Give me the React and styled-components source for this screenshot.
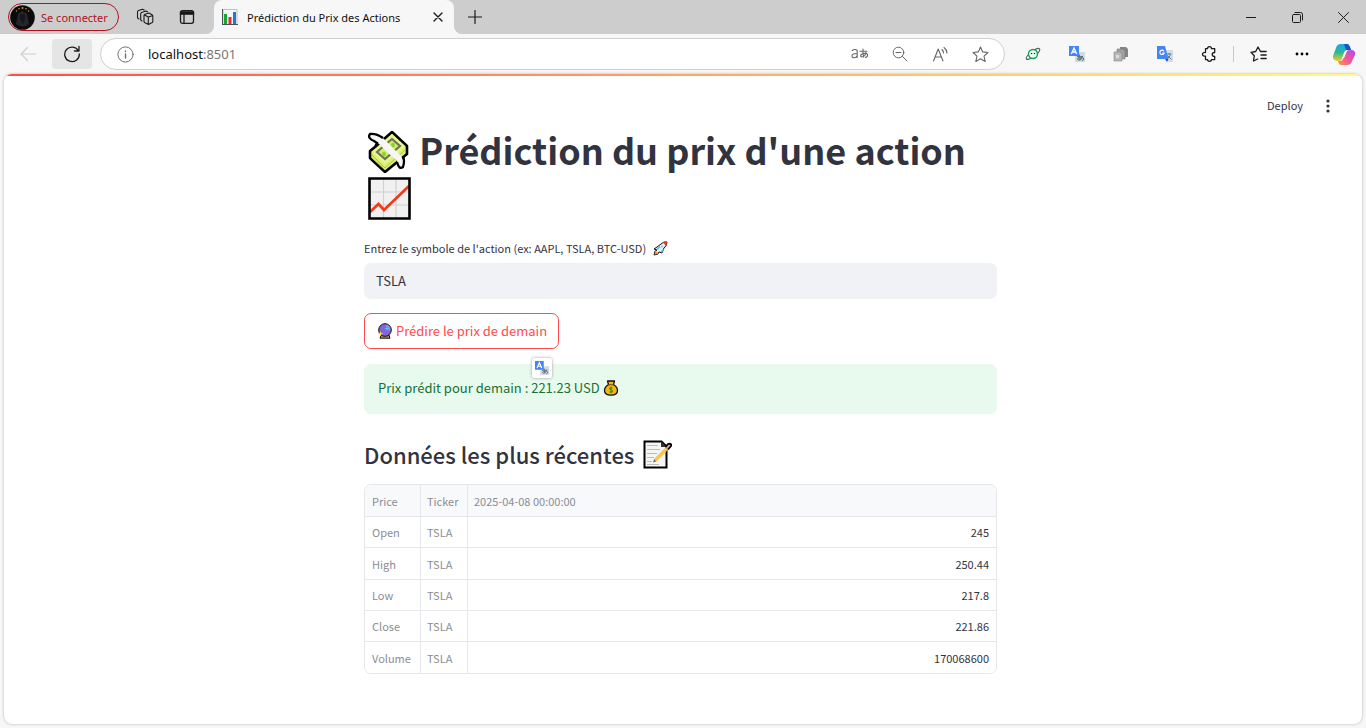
import React from "react";
import styled, { createGlobalStyle } from "styled-components";

const GlobalStyle = createGlobalStyle`
  * { box-sizing: border-box; }
  body { margin: 0; background: #f7f7f7; }
  button, input { font: inherit; color: inherit; }
`;

const ui = `"Segoe UI", "Noto Sans", "Open Sans", sans-serif`;
const body = `"Noto Sans CJK SC", "Noto Sans", sans-serif`;

const Window = styled.div`
  min-height: 100vh;
  display: flex;
  flex-direction: column;
  background: #f7f7f7;
`;

const TitleBar = styled.header`
  height: 34px;
  display: flex;
  align-items: stretch;
  background: #cdcdcd;
  font-family: ${ui};
  font-size: 11px;
  color: #111;
`;

const LeftTools = styled.div`
  display: flex;
  align-items: center;
  padding-left: 8px;
  width: 214px;
  border-bottom-right-radius: 8px;
  background: #cdcdcd;
`;

const ProfileButton = styled.button`
  height: 28px;
  width: 111px;
  display: flex;
  align-items: center;
  gap: 6px;
  padding: 0 0 0 1px;
  border: 1px solid #b1121d;
  border-radius: 14px;
  background: transparent;
  color: #b1121d;
  white-space: nowrap;
  margin-right: 5px;
`;

const IconButton = styled.button`
  width: ${(p) => p.$w || 42}px;
  height: ${(p) => p.$h || 30}px;
  flex: none;
  display: flex;
  align-items: center;
  justify-content: center;
  padding: 0;
  border: 0;
  border-radius: 4px;
  background: ${(p) => (p.$filled ? "#e5e5e5" : "transparent")};
`;

const TabStrip = styled.div`
  flex: 1;
  display: flex;
  background: #f7f7f7;
`;

const Tab = styled.div`
  width: 240px;
  display: flex;
  align-items: center;
  padding: 0 6px 0 8px;
  background: #f7f7f7;
  border-radius: 8px 8px 0 0;
`;

const TabCorner = styled.div`
  flex: 1;
  background: #cdcdcd;
  border-bottom-left-radius: 8px;
  display: flex;
  align-items: center;
  justify-content: space-between;
`;

const TabWell = styled.div`
  background: linear-gradient(#cdcdcd 50%, #f7f7f7 50%);
  display: flex;
`;

const TabTitle = styled.span`
  flex: 1;
  margin-left: 9px;
  white-space: nowrap;
`;

const WindowControls = styled.div`
  display: flex;
`;

const Toolbar = styled.nav`
  height: 40px;
  display: flex;
  align-items: center;
  padding: 0 2px 0 8px;
  font-family: ${ui};
`;

const NavButtons = styled.div`
  display: flex;
  gap: 4px;
`;

const AddressBar = styled.div`
  flex: 1;
  height: 32px;
  margin: 0 6px 0 8px;
  padding: 0 4px 0 3px;
  display: flex;
  align-items: center;
  border: 1px solid #d0d0d3;
  border-radius: 16px;
  background: #fff;
`;

const Address = styled.div`
  flex: 1;
  font-size: 13px;
  color: #767676;
  padding-left: 1px;
  b { font-weight: 400; color: #111; }
`;

const Divider = styled.span`
  width: 1px;
  height: 16px;
  margin: 0 2px;
  background: #c9c9c9;
`;

const Page = styled.section`
  flex: 1;
  margin: 0 4px 4px;
  border-radius: 8px;
  overflow: hidden;
  background: #fff;
  box-shadow: 0 0 3px #b4b4b4;
  font-family: ${body};
  font-size: 13px;
  color: #31333f;
`;

const Decoration = styled.div`
  height: 2px;
  background: linear-gradient(90deg, #ff4b4b, #fffd80);
`;

const AppHeader = styled.div`
  height: 50px;
  padding: 8px 19px 0 0;
  display: flex;
  justify-content: flex-end;
`;

const DeployButton = styled.button`
  height: 44px;
  padding: 0 10px 2px;
  border: 0;
  background: transparent;
  font-size: 11px;
`;

const Column = styled.main`
  max-width: 633px;
  margin: 0 auto;
`;

const ColumnArea = styled.div`
  padding: 0 5px 48px 0;
`;

const Title = styled.h1`
  margin: 0;
  font-size: 36px;
  line-height: 47px;
  font-weight: 700;
`;

const Emoji = styled.svg`
  width: ${(p) => p.$s}px;
  height: ${(p) => p.$s}px;
  vertical-align: ${(p) => p.$v || -3}px;
  margin-left: ${(p) => p.$ml || 0}px;
`;

const Label = styled.label`
  display: block;
  margin: 17px 0 4px;
  font-size: 11px;
  line-height: 22px;
`;

const TextInput = styled.input`
  display: block;
  width: 100%;
  height: 36px;
  padding: 0 12px 2px;
  border: 0;
  border-radius: 7px;
  background: #f0f2f6;
`;

const PredictButton = styled.button`
  display: block;
  height: 36px;
  margin: 14px 0 15px;
  padding: 0 11px 2px;
  border: 1px solid #ff4b4b;
  border-radius: 7px;
  background: #fff;
  color: #ff4b4b;
`;

const Alert = styled.div`
  position: relative;
  height: 50px;
  padding: 0 14px;
  border-radius: 7px;
  background: #e8f9ee;
  color: #177233;
  line-height: 47px;
`;

const TranslateBadge = styled.button`
  position: absolute;
  left: 168px;
  top: -6px;
  width: 20px;
  height: 20px;
  display: flex;
  align-items: center;
  justify-content: center;
  padding: 0;
  border: 0;
  border-radius: 2px;
  background: #fff;
  box-shadow: 0 0 3px #999;
`;

const Subtitle = styled.h2`
  margin: 24px 0 14px;
  font-size: 22px;
  line-height: 32px;
  font-weight: 500;
`;

const TableFrame = styled.div`
  border: 1px solid #e6e7ea;
  border-radius: 7px;
  overflow: hidden;
`;

const Table = styled.table`
  width: 100%;
  border-collapse: separate;
  border-spacing: 0;
  font-size: 11px;
  line-height: 16px;
`;

const Cell = styled.td`
  height: ${(p) => (p.$tall ? 32 : 31)}px;
  padding: 0 7px;
  border-right: 1px solid #e6e7ea;
  border-bottom: 1px solid #e6e7ea;
  font-weight: 400;
  text-align: ${(p) => (p.$num ? "right" : "left")};
  color: ${(p) => (p.$num ? "#31333f" : "#8b8d96")};
  background: ${(p) => (p.$head ? "#f8f9fb" : "#fff")};
  width: ${(p) => p.$w || "auto"};
  &:not(:first-child) { padding-left: 6px; }
  &:last-child { border-right: 0; }
  tbody tr:last-child > & { border-bottom: 0; }
`;

const Stroke = ({ s = 16, w = 1, c = "#1b1b1b", children }) => (
  <svg width={s} height={s} viewBox={`0 0 ${s} ${s}`} fill="none" stroke={c} strokeWidth={w} strokeLinecap="round" strokeLinejoin="round">
    {children}
  </svg>
);

const Avatar = () => (
  <svg width="25" height="25" viewBox="0 0 25 25">
    <circle cx="12.500" cy="12.500" r="12.300" fill="#0b0b0d" />
    <path d="M8 9q4-5 9 0l2 10q-6 5-13 0z" fill="#26262a" />
    <path d="M10 9h5v5l-2 5-3-5z" fill="#15161a" />
    <g fill="#c69b3d"><circle cx="12.500" cy="3" r="1" /><circle cx="9" cy="3.800" r=".8" /><circle cx="16" cy="3.800" r=".8" /><circle cx="6.500" cy="6" r=".7" /><circle cx="18.500" cy="6" r=".7" /></g>
  </svg>
);

const TranslateIcon = ({ s = 16 }) => (
  <svg width={s} height={s} viewBox="0 0 16 16">
    <rect x="6" y="6" width="10" height="10" fill="#d5dadd" />
    <rect width="10" height="10" fill="#4386f5" />
    <path d="M2.300 8 5 2l2.700 6M3.300 6h3.400" stroke="#fff" strokeWidth="1.300" fill="none" />
    <path d="M8 10.500h6M10.500 8.500q-.5 3 1 5.500M13.500 10q-1 4-4 4-2-1 .5-2.500 3-1 4.500 1 .5 1.500-1.500 2" stroke="#5d7686" strokeWidth="1.100" fill="none" />
  </svg>
);

const Money = (p) => (
  <Emoji viewBox="0 0 43 43" {...p}>
    <path d="M24 2 39 16v8L17 42 2 28v-7l5-4z" fill="#d9ef72" stroke="#000" strokeWidth="2.600" strokeLinejoin="round" />
    <path d="M24 4 37 16 17 34 4 22z" fill="#e5f88b" />
    <path d="m4 25 13 13L37 20M4 28l13 12" fill="none" stroke="#a9c63f" />
    <path d="M24 9 32 16 17 29 9 22z" fill="#d3f06a" stroke="#70745c" strokeWidth="2.200" />
    <ellipse cx="25" cy="15" rx="2" ry="2.500" fill="#8ed32c" />
    <ellipse cx="16" cy="24" rx="2" ry="2.500" fill="#8ed32c" />
    <path d="M2 5q7-3 14 4 10 10 17 17 3 4 1 11-5 2-5-7-4-2-14-12Q9 11 3 9z" fill="#f6f6f6" />
    <path d="M15 8Q8 3 2 4q-3 4 4 7l3 2-2 4M35 26q2 5 0 11-4 3-6-5" fill="none" stroke="#000" strokeWidth="2.300" />
  </Emoji>
);

const Chart = (p) => (
  <Emoji viewBox="0 0 43 43" {...p}>
    <path d="M1.500 1.500h40v40h-40z" fill="#f1f1f1" />
    <path d="M15.500 2v39M28 2v39M2 15h39M2 28h39" stroke="#d0d0d0" strokeWidth="1.200" />
    <path d="m2 35 8.500-8 5.500 6L41 9" fill="none" stroke="#f43b19" strokeWidth="2.800" />
    <path d="M1.500 1.500h40v40h-40z" fill="none" stroke="#000" strokeWidth="2.600" />
  </Emoji>
);

const Rocket = (p) => (
  <Emoji viewBox="0 0 15 15" {...p}>
    <path d="m4 6 4-3q3-3 6-2 0 4-3 6l-2 5-3-1-1 2-4 1 1-4 2-1-3-1z" fill="#e8f0f2" stroke="#111" strokeLinejoin="round" />
    <path d="M10 1.500q2-1 4-.5 0 3-1 4z" fill="#e83c25" />
    <path d="m1.500 13.500 1-4 3 3z" fill="#ff8d22" /><path d="m3.500 8 3-3 1 1-3 3zM7 11l3-3 1 .5-2 3z" fill="#52c2dc" />
    <circle cx="9" cy="5.500" r="1" fill="#7fc5d6" />
  </Emoji>
);

const Crystal = (p) => (
  <Emoji viewBox="0 0 16 16" {...p}>
    <path d="M4 12h8l1 3.200H3z" fill="#b98a6a" stroke="#111" strokeWidth="1" />
    <circle cx="8" cy="7" r="6.300" fill="#8067d5" stroke="#111" />
    <path d="M9 2.500q4 1 3.500 5" stroke="#a28df1" fill="none" strokeWidth="1.500" />
    <path d="m10 3 .7 1.800 1.800.7-1.800.7L10 8l-.7-1.800-1.800-.7 1.800-.7z" fill="#59c3ee" />
    <path d="m3.500 8 .8 2 2 .7-2 .8-.8 2-.7-2-2-.8 2-.7z" fill="#ffd62e" />
  </Emoji>
);

const Bag = (p) => (
  <Emoji viewBox="0 0 16 16" {...p}>
    <path d="M4.500 1h7L10.500 4.500q4 2.500 4 6 0 4.700-6.500 4.700T1.500 10.500q0-3.500 4-6z" fill="#f9b318" stroke="#111" strokeWidth="1.300" strokeLinejoin="round" />
    <path d="M5 4.800h6" stroke="#6d4216" />
    <path d="M9.500 8q-1.500-1-3 0 0 1.500 1.500 1.800 2 .4 1.500 2-1.500 1-3 0M8 6.800v6.200" fill="none" stroke="#15951c" />
  </Emoji>
);

const Memo = (p) => (
  <Emoji viewBox="0 0 29 29" {...p}>
    <path d="M1.500 1.500h17l5 5v21h-22z" fill="#f5f5f5" stroke="#000" strokeWidth="2" />
    <path d="M18 1.500v5.500h5.500z" fill="#333" />
    <path d="M4 5.500h11M4 9.500h13M4 13.500h10M4 17.500h7M4 21.500h5M4 24.500h12" stroke="#bcbcbc" />
    <path d="M11 19.500 23 7.500l2 2-12 12z" fill="#ffc94b" stroke="#e9ab2d" strokeWidth=".6" />
    <path d="m22.500 7 2.500-3q4-1 3 2l-3 3.500" fill="#e7a0a0" stroke="#000" strokeWidth="1.800" />
    <path d="m10 22.500 1.200-3 1.800 1.800z" fill="#555" />
  </Emoji>
);

const Copilot = () => (
  <svg width="22" height="21" viewBox="0 0 22 21">
    <defs>
      <linearGradient id="cpA" x1="0" y1="0" x2="0" y2="1"><stop offset="0" stopColor="#18a7ee" /><stop offset=".5" stopColor="#2bb992" /><stop offset="1" stopColor="#f0cf20" /></linearGradient>
      <linearGradient id="cpB" x1="1" y1="0" x2="0" y2="1"><stop offset="0" stopColor="#a64dfa" /><stop offset=".5" stopColor="#f2559a" /><stop offset="1" stopColor="#ff9447" /></linearGradient>
    </defs>
    <path d="M8 0h6q2 0 3 3l1 3h-4q-2 0-3 3l-2 6q-1 2-3 2H4q-5-1-4-5L3 4q1-4 5-4z" fill="url(#cpA)" />
    <path d="M11 0h3q2 0 3 3l1 3h-5z" fill="#1753ce" />
    <path d="M14 21H8q-2 0-3-4h3q2-1 3-4l2-5q1-2 4-2h2q4 1 3 5l-3 6q-1 4-5 4z" fill="url(#cpB)" />
    <path d="m9 14 3-7h2l-3 7z" fill="#fff" />
  </svg>
);

const rows = [
  ["Open", "245"],
  ["High", "250.44"],
  ["Low", "217.8"],
  ["Close", "221.86"],
  ["Volume", "170068600"],
];

export default function App() {
  return (
    <Window>
      <GlobalStyle />
      <TitleBar>
        <TabWell>
          <LeftTools>
            <ProfileButton><Avatar />Se connecter</ProfileButton>
            <IconButton aria-label="Workspaces">
              <Stroke s={18} w={1.1}>
                <path d="M8 7.500q0-1 1-1.300l4-1.200 3 1.700q.8.500.8 1.300v5.500q0 1-1 1.300L12.500 16.500 9 14.700q-1-.5-1-1.300zM8.500 7l3.800 2 4-1.300M12.300 9v7" />
                <path d="M6 13l-.8-.4q-.5-.4-.5-1.100V5.800q0-1 1-1.400l4-1.400 1.800.8M3 11l-.8-.5q-.7-.4-.7-1.200V4q0-1 1-1.400l4-1.400 1.700.7" />
              </Stroke>
            </IconButton>
            <IconButton aria-label="Tab actions">
              <Stroke w={1.3}>
                <rect x="1.500" y="1.700" width="13" height="12.600" rx="2" /><path d="M1.500 2.800h13v2.400h-13z" fill="#111" /><path d="M5 5v9" />
              </Stroke>
            </IconButton>
          </LeftTools>
        </TabWell>
        <TabStrip>
          <TabWell>
            <Tab>
              <svg width="16" height="16" viewBox="0 0 16 16"><path d="M1 .5h14v15H1z" fill="#f4f6f7" stroke="#b9c0c4" /><path d="M.5 0v16M0 15.500h16" stroke="#47525a" /><path d="M2 5h3v10H2z" fill="#15a832" /><path d="M6.500 8h3v7h-3z" fill="#e82c27" /><path d="M11 3h3v12h-3z" fill="#1f7ad3" /></svg>
              <TabTitle>Prédiction du Prix des Actions</TabTitle>
              <IconButton $w={20} aria-label="Close tab"><Stroke s={10} w={1.4}><path d="m1 1 8 8M9 1 1 9" /></Stroke></IconButton>
            </Tab>
          </TabWell>
          <TabCorner>
            <IconButton aria-label="New tab"><Stroke s={14} w={1.2}><path d="M7 .5v13M.5 7h13" /></Stroke></IconButton>
            <WindowControls>
              <IconButton $w={46} aria-label="Minimize"><Stroke s={10}><path d="M0 5.500h10" /></Stroke></IconButton>
              <IconButton $w={46} aria-label="Restore"><Stroke s={11}><rect x=".5" y="2.500" width="8" height="8" rx="1" /><path d="M3 .5h5.500q2 0 2 2V8" /></Stroke></IconButton>
              <IconButton $w={46} aria-label="Close"><Stroke s={11}><path d="m.5.5 10 10M10.500.5l-10 10" /></Stroke></IconButton>
            </WindowControls>
          </TabCorner>
        </TabStrip>
      </TitleBar>

      <Toolbar>
        <NavButtons>
          <IconButton $w={40} aria-label="Back"><Stroke c="#cfcfcf" w={1.2}><path d="M15.500 8H1M7.500 1.500 1 8l6.500 6.500" /></Stroke></IconButton>
          <IconButton $w={40} $filled aria-label="Refresh">
            <Stroke s={18} w={1.3}><path d="M15.500 6A7.300 7.300 0 1 0 16.300 9M16 1.500V6h-4.500" /></Stroke>
          </IconButton>
        </NavButtons>
        <AddressBar>
          <IconButton $w={43} aria-label="Site information"><Stroke s={17} c="#6f6f6f"><circle cx="8.500" cy="8.500" r="7.600" /><path d="M8.500 8v4M8.500 5v.5" strokeWidth="1.400" /></Stroke></IconButton>
          <Address><b>localhost</b>:8501</Address>
          <IconButton $w={40} aria-label="Translate page">
            <Stroke s={18} c="#666" w={1.1}><path d="M1.200 5.500q3-2 5 0v7M6 8.500q-5 0-5 2.300 0 2 2.200 1.900 2 0 3-2M9 6.200h7M12 4q-.5 4 .7 8M15 7.500q-1 4.500-4.500 4.500-2-1 .5-3 4-1.500 5.500.3.600 2.200-2 3.200" /></Stroke>
          </IconButton>
          <IconButton $w={40} aria-label="Zoom out"><Stroke c="#666"><circle cx="6.500" cy="6.500" r="5.300" /><path d="m10.500 10.500 4.500 4.500M4 6.500h5" /></Stroke></IconButton>
          <IconButton $w={40} aria-label="Read aloud"><Stroke s={17} c="#666" w={1.1}><path d="m1.500 15 4.700-12L11 15M3 11h6.500M10 3.500q1.500 1.500 1.500 3.500M12 1.500q3 2.300 3 5.500" /></Stroke></IconButton>
          <IconButton $w={40} aria-label="Add to favorites"><Stroke s={17} c="#666" w={1.1}><path d="m8.500 1 2.200 4.900 5.300.6-4 3.600 1.200 5.400-4.700-2.700-4.700 2.700L5 10.100 1 6.500l5.300-.6z" /></Stroke></IconButton>
        </AddressBar>
        <IconButton $w={44} aria-label="Planet extension">
          <svg width="16" height="14" viewBox="0 0 16 14" fill="none"><ellipse cx="8" cy="7" rx="8.200" ry="2.500" transform="rotate(-38 8 7)" stroke="#555e61" strokeWidth="1.200" /><circle cx="8" cy="7" r="4.500" fill="#e7fff0" stroke="#179c50" strokeWidth="1.400" /><path d="M6.500 6v1M9.500 6v1" stroke="#111" strokeWidth="1.200" /></svg>
        </IconButton>
        <IconButton $w={44} aria-label="Translator extension"><TranslateIcon /></IconButton>
        <IconButton $w={44} aria-label="Copy extension">
          <svg width="16" height="16" viewBox="0 0 16 16"><path d="M7 1h6l2 2v8H7z" fill="#858585" /><path d="M4 3h6l2 2v8H4z" fill="#a1a1a1" stroke="#777" strokeWidth=".6" /><path d="M1 6h6l2 2v7H1z" fill="#b7b7b7" stroke="#888" strokeWidth=".6" /><path d="M3 9h3v3H3z" fill="#ddd" /></svg>
        </IconButton>
        <IconButton $w={44} aria-label="Google translation extension">
          <svg width="16" height="16" viewBox="0 0 16 16"><path d="M6 4h10v12h-5z" fill="#d8dcdf" /><path d="M9.500 8h5M12 7v1.500M13.500 8.500q-1 3-3.500 4M10.500 9.500l4 4" stroke="#607d8b" fill="none" /><path d="M0 0h8l3.500 13H0z" fill="#4285f4" /><path d="m8 13 3.500 0L10 16z" fill="#3345b5" /><path d="M7 5.200A2.200 2.200 0 1 0 7.200 7H5.200" stroke="#fff" strokeWidth="1.100" fill="none" /></svg>
        </IconButton>
        <IconButton $w={44} aria-label="Extensions">
          <Stroke w={1.3}><path d="M4.500 2.700h2q0-2 2-2t2 2h3.200v3.800q-2.500 0-2.500 1.900t2.500 1.900v3.300h-3.200q0 1.700-2 1.700t-2-1.700h-2v-3.400q-3 0-3-1.900t3-1.900z" /></Stroke>
        </IconButton>
        <Divider />
        <IconButton $w={44} aria-label="Favorites"><Stroke s={17} w={1.3}><path d="M10.500 5.500 8 1 5.700 5.500 1 6.300l3.300 3.500-.8 5.200 4.200-2M10.500 5.500h5.700M11 9h5.200M11 12.500h5.200" /></Stroke></IconButton>
        <IconButton $w={44} aria-label="Settings and more"><svg width="14" height="4" viewBox="0 0 14 4"><circle cx="2" cy="2" r="1.400" /><circle cx="7" cy="2" r="1.400" /><circle cx="12" cy="2" r="1.400" /></svg></IconButton>
        <IconButton $w={40} aria-label="Copilot"><Copilot /></IconButton>
      </Toolbar>

      <Page>
        <Decoration />
        <AppHeader>
          <DeployButton>Deploy</DeployButton>
          <IconButton $w={30} $h={44} aria-label="Main menu"><svg width="4" height="14" viewBox="0 0 4 14" fill="#31333f"><circle cx="2" cy="2" r="1.600" /><circle cx="2" cy="7" r="1.600" /><circle cx="2" cy="12" r="1.600" /></svg></IconButton>
        </AppHeader>
        <ColumnArea>
          <Column>
            <Title><Money $s={43} $v={-8} $ml={4} /> Prédiction du prix d'une action <Chart $s={43} $v={-8} $ml={4} /></Title>
            <Label htmlFor="symbol">Entrez le symbole de l'action (ex: AAPL, TSLA, BTC-USD) <Rocket $s={15} $ml={4} /></Label>
            <TextInput id="symbol" defaultValue="TSLA" />
            <PredictButton><Crystal $s={16} $ml={1} /> Prédire le prix de demain</PredictButton>
            <Alert>
              Prix prédit pour demain : 221.23 USD <Bag $s={16} />
              <TranslateBadge aria-label="Translate selection"><TranslateIcon s={14} /></TranslateBadge>
            </Alert>
            <Subtitle>Données les plus récentes <Memo $s={29} $v={-5} $ml={4} /></Subtitle>
            <TableFrame>
              <Table>
                <thead>
                  <tr>
                    <Cell as="th" scope="col" $tall $head $w="56px">Price</Cell>
                    <Cell as="th" scope="col" $tall $head $w="47px">Ticker</Cell>
                    <Cell as="th" scope="col" $tall $head>2025-04-08 00:00:00</Cell>
                  </tr>
                </thead>
                <tbody>
                  {rows.map(([name, value], i) => (
                    <tr key={name}>
                      <Cell $tall={i === 1}>{name}</Cell>
                      <Cell>TSLA</Cell>
                      <Cell $num>{value}</Cell>
                    </tr>
                  ))}
                </tbody>
              </Table>
            </TableFrame>
          </Column>
        </ColumnArea>
      </Page>
    </Window>
  );
}
